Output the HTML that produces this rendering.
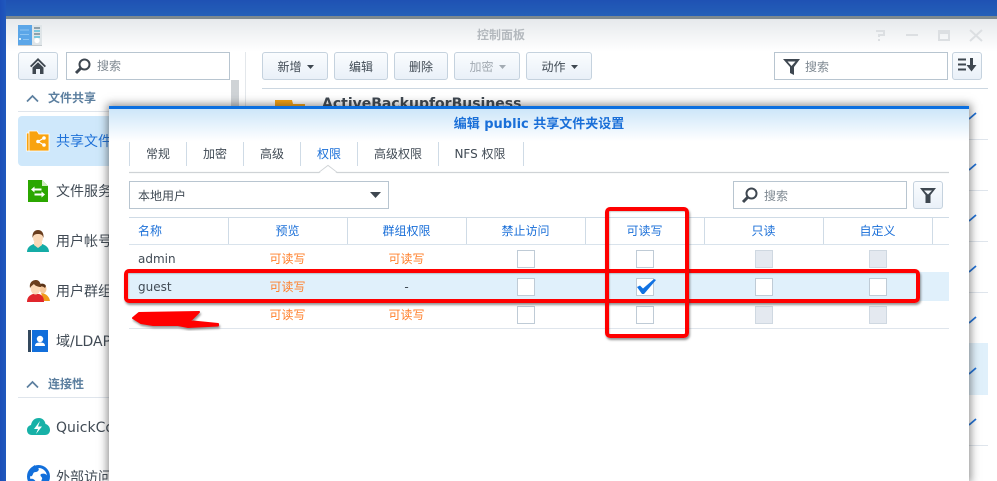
<!DOCTYPE html>
<html lang="zh"><head><meta charset="utf-8"><title>控制面板</title>
<style>
html,body{margin:0;padding:0;width:997px;height:481px;overflow:hidden}
body{position:relative;background:#2056b6;font-family:"DejaVu Sans","Noto Sans CJK SC",sans-serif;font-size:12px;color:#414b55}
#w{position:absolute;left:0;top:0;width:997px;height:481px;overflow:hidden;filter:blur(.3px)}
div,span,svg{position:absolute;box-sizing:border-box}
.t{white-space:nowrap;line-height:16px}
.c{text-align:center}
.btn{top:52px;height:28px;border:1px solid #c5d2de;border-radius:3px;background:linear-gradient(#fafcfe,#e9f0f8);text-align:center;line-height:28px;color:#414b55;font-size:12px;white-space:nowrap}
.inp{height:28px;border:1px solid #b8c5d0;background:#fff}
.ph{color:#7f8992;font-size:12px;line-height:16px;white-space:nowrap}
.ln{height:1px;background:#dfe5ec}
.side{font-size:14px;line-height:20px;white-space:nowrap;left:56px;color:#414b55}
.sec{left:48px;font-size:12px;font-weight:bold;line-height:16px;color:#5c7f9f;white-space:nowrap}
.tab{top:142px;height:24px;line-height:24px;text-align:center;font-size:12px;color:#414b55;white-space:nowrap}
.sep{width:1px;background:#cfdbe6}
.hd{top:223px;text-align:center;color:#1a6fd8;line-height:16px;white-space:nowrap}
.or{text-align:center;color:#ff7f2a;line-height:16px;white-space:nowrap;width:119px}
.cb{width:18px;height:18px;border:1px solid #bfcbd6;background:#fff}
.dis{background:#e4e9f0;border-color:#cfd8e1}
.red{border:4px solid #f00;border-radius:5px;box-shadow:1px 2px 2px rgba(60,60,60,.55),inset 1px 1px 1px rgba(60,60,60,.25)}
</style></head><body><div id="w">
<div style="left:0;top:0;width:997px;height:16px;background:linear-gradient(#1f52b4,#2460b8)"></div>
<div style="left:0;top:0;width:6px;height:481px;background:linear-gradient(90deg,#1c4eb8,#2059bd)"></div>

<!-- main window -->
<div style="left:6px;top:16px;width:991px;height:465px;background:#fff;border-top:3px solid #7d8a90;overflow:hidden"></div>
<div style="left:6px;top:19px;width:991px;height:32px;background:linear-gradient(#e6e9ec,#fff)"></div>
<svg style="left:18px;top:25px" width="24" height="21" viewBox="0 0 24 21"><rect width="24" height="20" fill="#dfe5e8"/><rect y="20" width="24" height="1" fill="#c4cace"/><rect width="14" height="20" fill="#5ba6e8"/><path d="M2 5h9M2 9.500h9M5 14.500h6" stroke="#8cc4f2" stroke-width="1"/><rect x="1" y="13" width="2" height="2" fill="#d5ecfc"/><path d="M16 3h6" stroke="#5a7480" stroke-width="1.200"/><path d="M16 6h6" stroke="#37b5d8" stroke-width="1.200"/><path d="M16 9h6" stroke="#5a7480" stroke-width="1.200"/><path d="M16 12h6" stroke="#37b5d8" stroke-width="1.200"/><circle cx="19" cy="15.500" r="2.600" fill="#fff"/></svg>
<div class="t" style="left:477px;top:27px;font-size:12px;font-weight:bold;color:#b4b9be">控制面板</div>
<svg style="left:870px;top:27px" width="116" height="16" viewBox="0 0 116 16" fill="none" stroke="#dcdfe2" stroke-width="2"><path d="M6 4h8v4h-5v2M9 12v2"/><path d="M36 8h12"/><rect x="69" y="4" width="10" height="9"/><path d="M69 5.500h10" stroke-width="3"/><path d="M100 3l12 11M112 3l-12 11"/></svg>

<!-- left toolbar -->
<div class="btn" style="left:18px;width:40px"></div>
<svg style="left:29px;top:57px" width="18" height="18" viewBox="0 0 18 18"><path d="M9 1L1 9l1.300 1.200L9 3.600l6.700 6.600L17 9z" fill="#3e4750"/><path d="M3.500 10.500L9 5.200l5.500 5.300V17H11v-5H7v5H3.500z" fill="#3e4750"/></svg>
<div class="inp" style="left:66px;top:52px;width:164px"></div>
<svg style="left:74px;top:58px" width="18" height="17" viewBox="0 0 18 17" fill="none" stroke="#3e4750"><circle cx="10.500" cy="6.500" r="5" stroke-width="2"/><path d="M6.500 10.500L2 15" stroke-width="3"/></svg>
<div class="ph" style="left:97px;top:58px">搜索</div>
<div style="left:231px;top:80px;width:8px;height:60px;background:#cfd3d6"></div>
<div style="left:245px;top:52px;width:1px;height:429px;background:#e3e7eb"></div>

<!-- sidebar -->
<svg style="left:26px;top:94px" width="13" height="9" viewBox="0 0 13 9" fill="none" stroke="#5c7f9f" stroke-width="1.700"><path d="M1 7.500L6.500 2 12 7.500"/></svg>
<div class="sec" style="top:90px">文件共享</div>
<div class="ln" style="left:18px;top:111px;width:212px"></div>
<div style="left:18px;top:116px;width:212px;height:50px;border-radius:4px;background:#cfe8fb"></div>
<svg style="left:26px;top:130px" width="24" height="22" viewBox="0 0 24 22"><path d="M.5 3h3v18h-3z" fill="#f9a30f" stroke="#fff" stroke-width=".7"/><path d="M3 21V1h8l2 3h10v17z" fill="#f9a30f" stroke="#fff" stroke-width=".8"/><path d="M18 8l-6 3.500 6 3.500" stroke="#fff" fill="none" stroke-width="1.100"/><circle cx="18" cy="8" r="1.800" fill="#fff"/><circle cx="12" cy="11.500" r="1.800" fill="#fff"/><circle cx="18" cy="15" r="1.800" fill="#fff"/></svg>
<div class="side" style="top:132px;color:#1e71d8">共享文件夹</div>
<svg style="left:28px;top:180px" width="20" height="22" viewBox="0 0 20 22"><path d="M0 0h14l6 6v16H0z" fill="#2ba700"/><path d="M14 0l6 6h-6z" fill="#cfeec0"/><path d="M3 9.500l3.500-3v2h7v2h-7v2z" fill="#fff"/><path d="M17 14.500l-3.500-3v2h-7v2h7v2z" fill="#fff"/></svg>
<div class="side" style="top:182px">文件服务</div>
<svg style="left:27px;top:230px" width="22" height="22" viewBox="0 0 22 22"><path d="M0 22c0-5 4-7 7-8h8c3 1 7 3 7 8z" fill="#15aca6"/><path d="M7 12h8v3l-4 3-4-3z" fill="#fbd9b8"/><ellipse cx="11" cy="7.500" rx="5" ry="6.500" fill="#fbd9b8"/><path d="M5.500 8C5 2 8 0 11 0s6 2 5.500 8c-1-3-2-4-5.500-4S6.500 5 5.500 8z" fill="#6a3e1e"/></svg>
<div class="side" style="top:232px">用户帐号</div>
<svg style="left:27px;top:280px" width="23" height="22" viewBox="0 0 23 22"><path d="M14 13c3 0 8 2 9 8h-6z" fill="#f09a1a"/><ellipse cx="16" cy="9" rx="3.500" ry="4.500" fill="#f5c79a"/><path d="M12 5c1-2 6-2 7 1l-1 2c-2-2-4-2-6-1z" fill="#5a3216"/><path d="M0 22c0-5 3-7 6-8h6c3 1 5 3 5 8z" fill="#e0262c"/><ellipse cx="8.500" cy="8" rx="5" ry="6.500" fill="#fbd9b8"/><path d="M3 8C2 2 6 0 9 0s5 3 5 7c-2 0-6-1-7-3-1 1-3 2-4 4z" fill="#6a3e1e"/></svg>
<div class="side" style="top:282px">用户群组</div>
<svg style="left:28px;top:330px" width="20" height="22" viewBox="0 0 20 22"><rect width="3" height="22" fill="#34495e"/><rect x="4" width="16" height="22" fill="#126fdb"/><circle cx="12" cy="9" r="3.200" fill="#fff"/><path d="M7 16c0-3 2-3.500 5-3.500s5 .5 5 3.500z" fill="#fff"/></svg>
<div class="side" style="top:332px">域/LDAP</div>
<svg style="left:26px;top:380px" width="13" height="9" viewBox="0 0 13 9" fill="none" stroke="#5c7f9f" stroke-width="1.700"><path d="M1 7.500L6.500 2 12 7.500"/></svg>
<div class="sec" style="top:376px">连接性</div>
<div class="ln" style="left:18px;top:397px;width:212px"></div>
<svg style="left:27px;top:417px" width="23" height="20" viewBox="0 0 23 20"><path d="M5 18C1 18 0 15 0 13c0-3 2-4.500 4-5C5 3 8 1 12 1c3.500 0 6 2.500 6.500 6 2.500.5 4.500 3 4.500 6 0 3-2 5-5 5z" fill="#17b1a7"/><path d="M13 4l-6 8h4l-2 5 6-7.500h-4z" fill="#fff"/></svg>
<div class="side" style="top:418px">QuickConnect</div>
<svg style="left:27px;top:465px" width="23" height="16" viewBox="0 0 23 16"><circle cx="11.500" cy="11.500" r="10" fill="#fff" stroke="#126fdb" stroke-width="3"/><path d="M8 1c3 1 5 3 3 5S7 6 6 9s-3 3-4 1c0-4 2-8 6-10zM14 9c3-1 6 0 7 3 0 3-2 7-5 8-2-2-2-4-1-6s-3-3-1-5zM3 14c3-1 5 1 6 3s0 4-1 4c-3-1-5-4-5-7z" fill="#126fdb"/></svg>
<div class="side" style="top:468px">外部访问</div>

<!-- right toolbar -->
<div class="btn" style="left:262px;width:66px;padding-right:11px">新增</div>
<svg style="left:307px;top:65px" width="8" height="4"><path d="M0 0h7L3.500 4z" fill="#3e4750"/></svg>
<div class="btn" style="left:334px;width:54px">编辑</div>
<div class="btn" style="left:394px;width:54px">删除</div>
<div class="btn" style="left:454px;width:66px;padding-right:11px;color:#a3abb3">加密</div>
<svg style="left:499px;top:65px" width="8" height="4"><path d="M0 0h7L3.500 4z" fill="#a3abb3"/></svg>
<div class="btn" style="left:526px;width:66px;padding-right:11px">动作</div>
<svg style="left:571px;top:65px" width="8" height="4"><path d="M0 0h7L3.500 4z" fill="#3e4750"/></svg>
<div class="inp" style="left:774px;top:52px;width:174px"></div>
<svg style="left:783px;top:58px" width="17" height="17" viewBox="0 0 17 17"><path fill-rule="evenodd" d="M0 1h17l-6 8v8l-4-2V9zM4.500 3.500h8L8.500 8z" fill="#3e4750"/></svg>
<div class="ph" style="left:805px;top:59px">搜索</div>
<div class="btn" style="left:952px;width:30px"></div>
<svg style="left:958px;top:58px" width="19" height="14" viewBox="0 0 19 14"><path d="M0 1.500h8M0 6.500h8M0 11.500h8" stroke="#3e4750" stroke-width="2"/><path d="M12 0h3v7h3.500l-5 6.500-5-6.500H12z" fill="#3e4750"/></svg>
<div style="left:262px;top:88px;width:726px;height:1px;background:#ccd7e1"></div>

<!-- background list -->
<svg style="left:275px;top:100px" width="30" height="7"><path d="M0 7V0h17l1 4h12v3z" fill="#f9a30f"/></svg>
<div class="t" style="left:322px;top:96px;font-size:14px;font-weight:bold;line-height:17px;color:#3e4750">ActiveBackupforBusiness</div>
<div class="ln" style="left:262px;top:139px;width:726px"></div>
<div class="ln" style="left:262px;top:190px;width:726px"></div>
<div class="ln" style="left:262px;top:241px;width:726px"></div>
<div class="ln" style="left:262px;top:292px;width:726px"></div>
<div style="left:262px;top:343px;width:726px;height:52px;background:#e0f0fb"></div>
<div class="ln" style="left:262px;top:445px;width:726px"></div>
<svg style="left:966px;top:105px" width="12" height="325" viewBox="0 0 12 325" fill="none" stroke="#1e71d8" stroke-width="1.800"><path d="M3 14l7-6M3 65l7-6M3 116l7-6M3 167l7-6M3 218l7-6M3 269l7-6M3 320l7-6"/></svg>

<!-- dialog -->
<div style="left:109px;top:106px;width:860px;height:375px;background:#fff;box-shadow:0 0 8px 2px rgba(40,40,40,.5)"></div>
<div style="left:109px;top:106px;width:860px;height:3px;background:#0b6fe0"></div>
<div style="left:109px;top:109px;width:860px;height:32px;background:linear-gradient(#cde6f9,#fff)"></div>
<div class="t c" style="left:109px;top:117px;width:860px;font-size:13px;font-weight:bold;color:#1a6fd8">编辑 public 共享文件夹设置</div>

<div class="sep" style="left:129px;top:142px;height:24px"></div>
<div class="tab" style="left:130px;width:56px">常规</div>
<div class="sep" style="left:186px;top:142px;height:24px"></div>
<div class="tab" style="left:187px;width:56px">加密</div>
<div class="sep" style="left:243px;top:142px;height:24px"></div>
<div class="tab" style="left:244px;width:56px">高级</div>
<div class="sep" style="left:300px;top:142px;height:24px"></div>
<div class="tab" style="left:301px;width:56px;color:#1a6fd8">权限</div>
<div class="sep" style="left:357px;top:142px;height:24px"></div>
<div class="tab" style="left:358px;width:80px">高级权限</div>
<div class="sep" style="left:438px;top:142px;height:24px"></div>
<div class="tab" style="left:438px;width:84px">NFS 权限</div>
<div class="sep" style="left:523px;top:142px;height:24px"></div>
<svg style="left:129px;top:164px" width="820" height="10" viewBox="0 0 820 10" fill="none"><path d="M0 8.500h190l9-7 9 7H820" stroke="#cfd3d6" stroke-width="1.200"/><path d="M191 8l8-6 8 6z" fill="#fff"/></svg>

<div class="inp" style="left:129px;top:181px;width:260px"></div>
<div class="t" style="left:138px;top:188px">本地用户</div>
<svg style="left:370px;top:192px" width="12" height="7"><path d="M0 0h11L5.500 6z" fill="#3e4750"/></svg>
<div class="inp" style="left:733px;top:181px;width:174px"></div>
<svg style="left:741px;top:187px" width="18" height="17" viewBox="0 0 18 17" fill="none" stroke="#3e4750"><circle cx="10.500" cy="6.500" r="5" stroke-width="2"/><path d="M6.500 10.500L2 15" stroke-width="3"/></svg>
<div class="ph" style="left:764px;top:188px">搜索</div>
<div class="btn" style="left:913px;top:181px;width:30px"></div>
<svg style="left:920px;top:187px" width="16" height="16" viewBox="0 0 16 16"><path fill-rule="evenodd" d="M0 1h16l-5.500 7v8h-5V8zM4 3.500h8L8 7.500z" fill="#3e4750"/></svg>

<!-- table -->
<div style="left:129px;top:217px;width:820px;height:1px;background:#cfdbe6"></div>
<div style="left:129px;top:244px;width:820px;height:1px;background:#d9e3ec"></div>
<div class="sep" style="left:228px;top:218px;height:26px"></div>
<div class="sep" style="left:347px;top:218px;height:26px"></div>
<div class="sep" style="left:466px;top:218px;height:26px"></div>
<div class="sep" style="left:585px;top:218px;height:26px"></div>
<div class="sep" style="left:704px;top:218px;height:26px"></div>
<div class="sep" style="left:823px;top:218px;height:26px"></div>
<div class="sep" style="left:932px;top:218px;height:26px"></div>
<div class="hd" style="left:138px">名称</div>
<div class="hd" style="left:228px;width:119px">预览</div>
<div class="hd" style="left:347px;width:119px">群组权限</div>
<div class="hd" style="left:466px;width:119px">禁止访问</div>
<div class="hd" style="left:585px;width:119px">可读写</div>
<div class="hd" style="left:704px;width:119px">只读</div>
<div class="hd" style="left:823px;width:109px">自定义</div>

<div style="left:129px;top:272px;width:820px;height:29px;background:#e0f0fb"></div>
<div class="ln" style="left:129px;top:328px;width:820px"></div>
<div class="t" style="left:138px;top:251px">admin</div>
<div class="t" style="left:138px;top:279px">guest</div>
<div class="or" style="left:228px;top:251px">可读写</div>
<div class="or" style="left:347px;top:251px">可读写</div>
<div class="or" style="left:228px;top:279px">可读写</div>
<div class="t c" style="left:347px;top:279px;width:119px">-</div>
<div class="or" style="left:228px;top:307px">可读写</div>
<div class="or" style="left:347px;top:307px">可读写</div>

<div class="cb" style="left:517px;top:250px"></div>
<div class="cb" style="left:636px;top:250px"></div>
<div class="cb dis" style="left:755px;top:250px"></div>
<div class="cb dis" style="left:869px;top:250px"></div>
<div class="cb" style="left:517px;top:278px"></div>
<div class="cb" style="left:636px;top:278px"></div>
<div class="cb" style="left:755px;top:278px"></div>
<div class="cb" style="left:869px;top:278px"></div>
<div class="cb" style="left:517px;top:306px"></div>
<div class="cb" style="left:636px;top:306px"></div>
<div class="cb dis" style="left:755px;top:306px"></div>
<div class="cb dis" style="left:869px;top:306px"></div>
<svg style="left:637px;top:279px" width="20" height="16" viewBox="0 0 20 16"><path d="M0 8l3-1.500 3 3L17 0l2 1L7 15H5z" fill="#1172e2"/></svg>

<!-- annotations -->
<div class="red" style="left:124px;top:269px;width:796px;height:34px"></div>
<div class="red" style="left:605px;top:207px;width:84px;height:131px"></div>
<svg style="left:128px;top:307px" width="98" height="24" viewBox="0 0 98 24"><path d="M5 11l6-5 60-1-7 7-4 2 30 3v1.500l-30 1.500-10-2-25 0-12-2-8-5z" fill="#f00" stroke="#f00" stroke-width="2" stroke-linejoin="round" style="filter:drop-shadow(1px 2px 1px rgba(60,60,60,.55))"/></svg>
</div></body></html>
